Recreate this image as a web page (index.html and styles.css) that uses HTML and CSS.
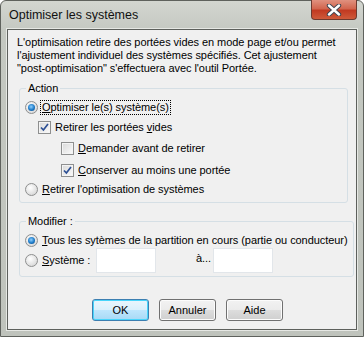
FILE: index.html
```html
<!DOCTYPE html>
<html lang="fr">
<head>
    <meta charset="UTF-8">
    <title>Optimiser les systèmes</title>
    <link rel="stylesheet" href="styles.css">
</head>
<body>
<div class="window">
    <!-- barre de titre -->
    <div class="titlebar">Optimiser les systèmes</div>
    <div class="close-btn">
        <svg width="18" height="12" viewBox="0 0 18 12">
            <path d="M4 1.5 L14 10.5 M14 1.5 L4 10.5" stroke="#3d4450" stroke-width="4.4" stroke-linecap="round"/>
            <path d="M4 1.5 L14 10.5 M14 1.5 L4 10.5" stroke="#fff" stroke-width="2.4" stroke-linecap="round"/>
        </svg>
    </div>

    <div class="client">
        <p class="intro">L'optimisation retire des portées vides en mode page et/ou permet<br>l'ajustement individuel des systèmes spécifiés. Cet ajustement<br>"post-optimisation" s'effectuera avec l'outil Portée.</p>

        <fieldset class="group action">
            <legend>Action</legend>
            <div class="row r1"><span class="radio on"></span><span class="lbl focus"><u>O</u>ptimiser le(s) système(s)</span></div>
            <div class="row r2 indent1"><span class="check on"><svg width="9" height="9" viewBox="0 0 9 9"><path d="M1 4.5 L3.4 7 L8 1" fill="none" stroke="#2c4f94" stroke-width="1.7"/></svg></span><span class="lbl">Retirer les portées <u>v</u>ides</span></div>
            <div class="row r3 indent2"><span class="check"></span><span class="lbl"><u>D</u>emander avant de retirer</span></div>
            <div class="row r4 indent2"><span class="check on"><svg width="9" height="9" viewBox="0 0 9 9"><path d="M1 4.5 L3.4 7 L8 1" fill="none" stroke="#2c4f94" stroke-width="1.7"/></svg></span><span class="lbl"><u>C</u>onserver au moins une portée</span></div>
            <div class="row r5"><span class="radio"></span><span class="lbl"><u>R</u>etirer l'optimisation de systèmes</span></div>
        </fieldset>

        <fieldset class="group modifier">
            <legend>Modifier :</legend>
            <div class="row m1"><span class="radio on"></span><span class="lbl"><u>T</u>ous les sytèmes de la partition en cours (partie ou conducteur)</span></div>
            <div class="row m2">
                <span class="radio"></span><span class="lbl sys"><u>S</u>ystème :</span>
                <input type="text" class="field">
                <span class="lbl a-lbl">à...</span>
                <input type="text" class="field">
            </div>
        </fieldset>

        <div class="buttons">
            <button class="btn default">OK</button>
            <button class="btn">Annuler</button>
            <button class="btn">Aide</button>
        </div>
    </div>
</div>
</body>
</html>
```

FILE: styles.css
```css
* {
    box-sizing: border-box;
    margin: 0;
    padding: 0;
}

body {
    font-family: "Liberation Sans", Arial, sans-serif;
    font-size: 11px;
    letter-spacing: -0.06px;
    color: #000;
    background-color: #fff;
    width: 364px;
    height: 337px;
    overflow: hidden;
}

/* cadre de la fenêtre */
.window {
    position: relative;
    width: 364px;
    height: 337px;
    background: linear-gradient(#d3d6d0, #c4c8c1 30px, #bfc3bc);
    border: 1px solid #5f625d;
    border-radius: 6px 6px 0 0;
    padding: 0 6px 0 6px;
}

.titlebar {
    height: 28px;
    padding: 7px 0 0 2px;
    font-size: 12.5px;
    letter-spacing: 0;
    color: #111;
}

.close-btn {
    position: absolute;
    top: -1px;
    right: 6px;
    width: 46px;
    height: 20px;
    border: 1px solid #6d3a30;
    border-top: none;
    border-radius: 0 0 4px 4px;
    background: linear-gradient(#e0917f, #d2664f 45%, #c13a22 55%, #cf5a3a);
    display: flex;
    align-items: center;
    justify-content: center;
}

.client {
    height: 301px;
    background-color: #f0f0f0;
    border: 1px solid #5d605c;
    box-shadow: 0 0 0 1px #e6e8e4;
}

.intro {
    padding: 6px 8px 0 9px;
    line-height: 13px;
    height: 52px;
    white-space: nowrap;
}

/* boîtes de groupe */
.group {
    margin: 0 8px 0 11px;
    border: 1px solid #d5dfe5;
    border-radius: 3px;
    padding: 0 4px 3px 5px;
}

.group legend {
    margin-left: 1px;
    padding: 0 2px;
    line-height: 13px;
}

.modifier {
    margin-top: 12px;
}

.row {
    display: flex;
    align-items: center;
    height: 20px;
}

.r1 {
    margin-top: 2px;
}

.r3 {
    margin-top: 1px;
}

.r4 {
    margin-top: 2px;
}

.r5 {
    margin-top: -1px;
}

.m1 {
    margin-top: 2px;
}

.m2 {
    height: 25px;
    margin-top: -2px;
}

.indent1 {
    padding-left: 13px;
}

.indent2 {
    padding-left: 36px;
}

.lbl {
    padding: 0 1px;
    line-height: 13px;
    white-space: nowrap;
}

.lbl u {
    text-decoration: underline;
    text-underline-offset: 1px;
}

.focus {
    outline: 1px dotted #000;
    outline-offset: 0;
}

/* boutons radio */
.radio {
    width: 13px;
    height: 13px;
    border-radius: 50%;
    border: 1px solid #8e8f8f;
    background: radial-gradient(circle at 40% 35%, #ffffff, #d8d8d8 80%);
    margin-right: 3px;
    flex: none;
    position: relative;
}

.radio.on::after {
    content: "";
    position: absolute;
    left: 2px;
    top: 2px;
    width: 7px;
    height: 7px;
    border-radius: 50%;
    background: radial-gradient(circle at 45% 40%, #8fd0ff, #1c7ac7 55%, #0b3f7a);
}

/* cases à cocher */
.check {
    width: 13px;
    height: 13px;
    border: 1px solid #8e8f8f;
    background: linear-gradient(135deg, #d9d9d9, #fbfbfb);
    box-shadow: inset 0 0 0 1px #f4f4f4;
    margin-right: 3px;
    flex: none;
    display: flex;
    align-items: center;
    justify-content: center;
}

.sys {
    width: 55px;
}

.field {
    width: 60px;
    height: 25px;
    border: 1px solid #e2e6ea;
    background-color: #fff;
}

.a-lbl {
    margin-left: 40px;
    width: 17px;
    padding: 0;
    align-self: flex-start;
    margin-top: 4px;
}

/* boutons du bas */
.buttons {
    display: flex;
    gap: 10px;
    padding: 22px 0 0 84px;
}

.btn {
    width: 57px;
    height: 22px;
    font-family: "Liberation Sans", Arial, sans-serif;
    font-size: 11px;
    color: #000;
    border: 1px solid #707070;
    border-radius: 3px;
    background: linear-gradient(#f2f2f2, #ebebeb 50%, #dddddd 51%, #cfcfcf);
    box-shadow: inset 0 0 0 1px #fcfcfc;
}

.btn.default {
    border-color: #3c7fb1;
    background: linear-gradient(#eaf6fd, #d9f0fc 50%, #bee6fd 51%, #a7d9f5);
    box-shadow: inset 0 0 0 1px #48d5fb;
}
```
